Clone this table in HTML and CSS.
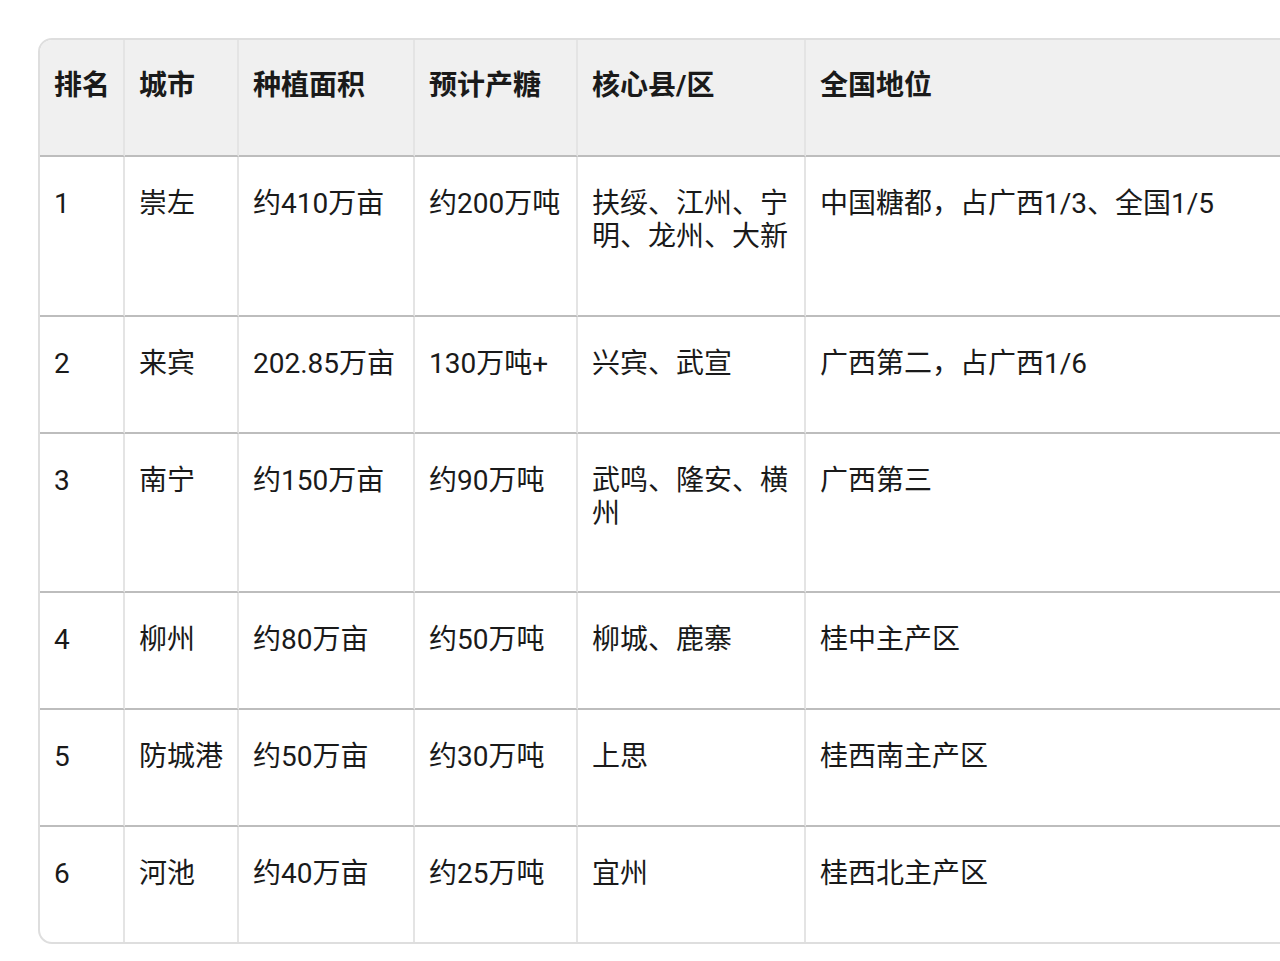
FILE: index.html
```html
<!DOCTYPE html>
<html lang="zh-CN">
<head>
<meta charset="utf-8">
<link rel="stylesheet" href="styles.css">
</head>
<body>
<div class="wrap">
<table class="tbl">
<colgroup>
<col class="c1"><col class="c2"><col class="c3"><col class="c4"><col class="c5"><col class="c6">
</colgroup>
<thead>
<tr><th>排名</th><th>城市</th><th>种植面积</th><th>预计产糖</th><th>核心县/区</th><th>全国地位</th></tr>
</thead>
<tbody>
<tr class="tall"><td>1</td><td>崇左</td><td>约410万亩</td><td>约200万吨</td><td>扶绥、江州、宁明、龙州、大新</td><td>中国糖都，占广西1/3、全国1/5</td></tr>
<tr><td>2</td><td>来宾</td><td>202.85万亩</td><td>130万吨+</td><td>兴宾、武宣</td><td>广西第二，占广西1/6</td></tr>
<tr class="tall tall-b"><td>3</td><td>南宁</td><td>约150万亩</td><td>约90万吨</td><td>武鸣、隆安、横州</td><td>广西第三</td></tr>
<tr><td>4</td><td>柳州</td><td>约80万亩</td><td>约50万吨</td><td>柳城、鹿寨</td><td>桂中主产区</td></tr>
<tr><td>5</td><td>防城港</td><td>约50万亩</td><td>约30万吨</td><td>上思</td><td>桂西南主产区</td></tr>
<tr><td>6</td><td>河池</td><td>约40万亩</td><td>约25万吨</td><td>宜州</td><td>桂西北主产区</td></tr>
</tbody>
</table>
</div>
</body>
</html>
```

FILE: styles.css
```css
html, body {
  margin: 0;
  padding: 0;
  background: #ffffff;
  overflow: hidden;
}
body {
  width: 1280px;
  height: 961px;
  font-family: "Roboto", "Noto Sans CJK SC", sans-serif;
  color: #1a1a1a;
}
.wrap {
  margin: 38px 0 0 38px;
  width: 1400px;
  border: 2px solid #dedede;
  border-radius: 14px;
  overflow: hidden;
}
.tbl {
  border-collapse: separate;
  border-spacing: 0;
  table-layout: fixed;
  width: 1398px;
}
.c1 { width: 85px; }
.c2 { width: 114px; }
.c3 { width: 176px; }
.c4 { width: 163px; }
.c5 { width: 228px; }
.c6 { width: 632px; }
.tbl th, .tbl td {
  box-sizing: border-box;
  text-align: left;
  vertical-align: top;
  font-size: 28px;
  line-height: 33px;
  padding: 30px 12px 0 14px;
  height: 115px;
  border-right: 2px solid #e4e4e4;
  border-bottom: 2px solid #bdbdbd;
  word-break: break-all;
}
.tbl th:last-child, .tbl td:last-child {
  border-right: none;
}
.tbl th {
  background: #f0f0f0;
  font-weight: 700;
  height: 117px;
  padding-top: 29px;
}
.tbl tbody tr td {
  height: 117px;
}
.tbl tbody tr.tall td {
  height: 160px;
}
.tbl tbody tr.tall-b td {
  height: 159px;
}
.tbl tbody tr:last-child td {
  border-bottom: none;
  height: 115px;
}
.tbl td {
  font-weight: 400;
}
```
